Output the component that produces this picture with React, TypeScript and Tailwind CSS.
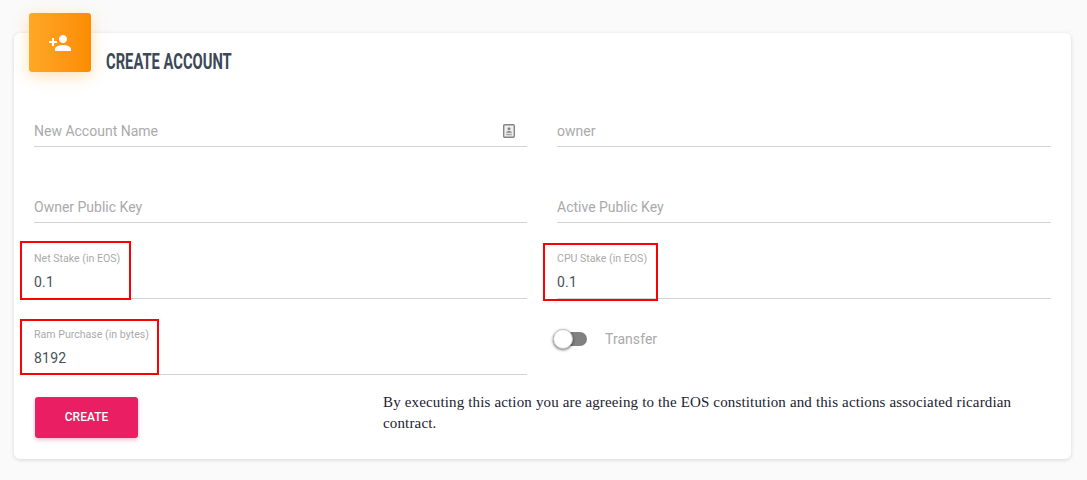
import { MdPersonAdd } from "react-icons/md";

const Field = ({ placeholder, label, value, icon, box }: { placeholder?: string; label?: string; value?: string; icon?: boolean; box?: string }) => (
  <div className="relative h-[76px] border-b border-[#d2d2d2] box-border">
    {label && <div className="absolute left-0 top-[29px] text-[10.6px] leading-[13px] text-[#aaaaaa]">{label}</div>}
    {value && <div className="absolute left-0 top-[50px] text-[14px] leading-[18px] tracking-[0.2px] text-[#495057]">{value}</div>}
    {placeholder && <div className="absolute left-0 top-[50px] text-[14px] leading-[20px] text-[#aaaaaa]">{placeholder}</div>}
    {icon && (
      <svg viewBox="0 0 12 14" className="absolute right-[12px] top-[53px] h-[14px] w-[12px]">
        <rect x="0.7" y="0.7" width="10.6" height="12.6" rx="1" fill="#efefef" stroke="#858585" strokeWidth="1.4" />
        <circle cx="6" cy="4.8" r="1.5" fill="#858585" />
        <path d="M3.2 8.4c0-1 1.5-1.5 2.8-1.5s2.800 .5 2.800 1.500v.4H3.200z" fill="#858585" />
        <rect x="3.200" y="9.800" width="5.600" height="1.500" fill="#a5a5a5" />
      </svg>
    )}
    {box && <div className={`absolute border-2 border-[#ff0000] ${box}`} />}
  </div>
);

export default function App() {
  return (
    <div className="h-[480px] w-[1087px] overflow-hidden bg-[#fafafa] pt-[33px] pl-[14px] font-['Roboto',sans-serif]">
      <div className="relative h-[426px] w-[1057px] rounded-md bg-white shadow-[0_1px_4px_rgba(0,0,0,0.14)]">
        <div className="absolute left-[15px] top-[-20px] flex h-[59px] w-[62px] items-center justify-center rounded-[3px] bg-linear-to-r from-[#ffa726] to-[#fb8c00] pt-px shadow-[0_4px_16px_rgba(255,152,0,0.3)]">
          <MdPersonAdd className="text-[24px] text-white" />
        </div>
        <div className="pl-[92px] pt-[17px]">
          <h1 className="h-[21px] origin-left scale-x-[0.67] text-[22px] leading-[24px] font-bold whitespace-nowrap text-[#3c4858]">CREATE ACCOUNT</h1>
        </div>
        <div className="grid grid-cols-[493px_494px] gap-x-[30px] pl-[20px]">
          <Field placeholder="New Account Name" icon />
          <Field placeholder="owner" />
          <Field placeholder="Owner Public Key" />
          <Field placeholder="Active Public Key" />
          <Field label="Net Stake (in EOS)" value="0.1" box="left-[-14px] top-[18px] h-[59px] w-[111px]" />
          <Field label="CPU Stake (in EOS)" value="0.1" box="left-[-14px] top-[20px] h-[58px] w-[115px]" />
          <Field label="Ram Purchase (in bytes)" value="8192" box="left-[-14px] top-[20px] h-[56px] w-[139px]" />
          <div className="flex h-[76px] items-start gap-[18px] pt-[30px]">
            <div className="relative ml-[-4px] mt-[3px] h-[14px] w-[34px] rounded-full bg-[#818181]">
              <div className="absolute left-0 top-[-3px] h-[20px] w-[20px] rounded-full border border-[#c8c8c8] bg-white shadow-[0_1px_3px_rgba(0,0,0,0.6)]" />
            </div>
            <span className="text-[14px] leading-[20px] tracking-[0.05px] text-[#aaaaaa]">Transfer</span>
          </div>
        </div>
        <div className="flex items-start pl-[21px] pt-[22px]">
          <button className="h-[41px] w-[103px] rounded-[3px] bg-[#e91e63] pb-[2px] text-[12px] font-medium text-white shadow-[0_2px_4px_rgba(233,30,99,0.3)]">CREATE</button>
          <p className="ml-[245px] mt-[-5px] w-[660px] font-['Liberation_Serif',serif] text-[15px] leading-[21px] tracking-[0.15px] text-[#1c2230]">By executing this action you are agreeing to the EOS constitution and this actions associated ricardian contract.</p>
        </div>
      </div>
    </div>
  );
}
